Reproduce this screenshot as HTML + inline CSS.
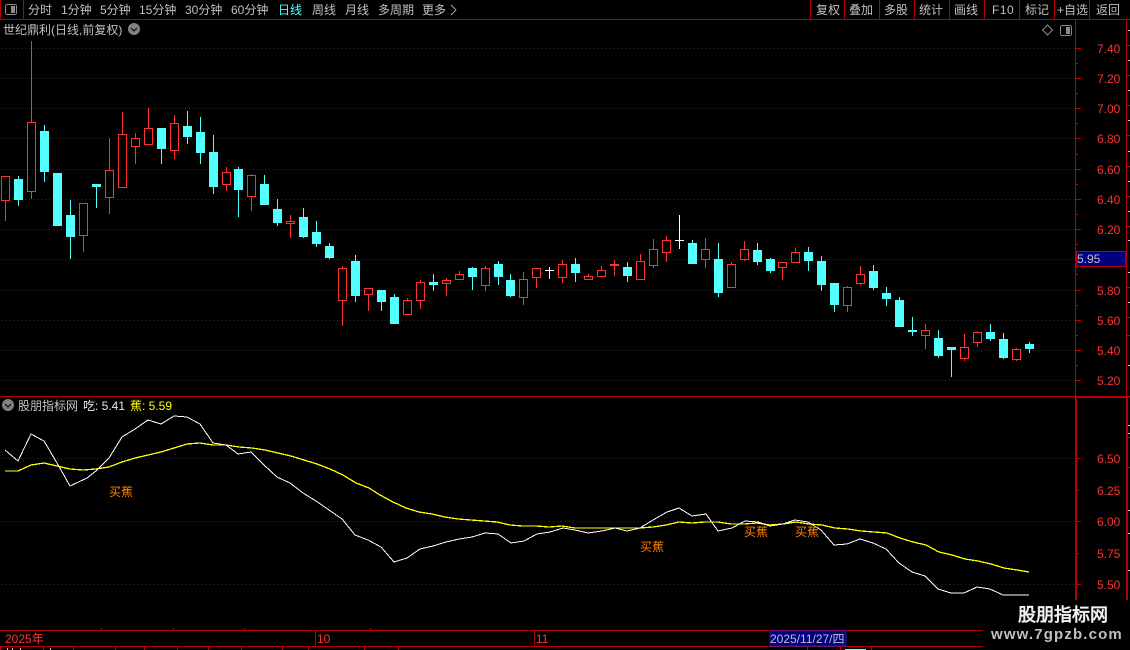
<!DOCTYPE html>
<html><head><meta charset="utf-8"><title>K线</title>
<style>
html,body{margin:0;padding:0;background:#000;width:1130px;height:650px;overflow:hidden}
svg{display:block;position:absolute;left:0;top:0}
text{font-family:"Liberation Sans","WenQuanYi Zen Hei",sans-serif;font-size:12px;fill:#c0c0c0}
.r{fill:#ff3232}
.o{fill:#ff8000}
.y{fill:#ffff00}
.c{fill:#54ffff}
.w{fill:#e8e8e8}
</style></head><body>
<svg width="1130" height="650" viewBox="0 0 1130 650" shape-rendering="crispEdges">
<rect width="1130" height="650" fill="#000"/>
<!-- grid -->
<path fill="none" stroke="#9c0000" stroke-dasharray="1 3" d="M1 48.5H1075M1 78.5H1075M1 108.5H1075M1 138.5H1075M1 169.5H1075M1 199.5H1075M1 229.5H1075M1 259.5H1075M1 290.5H1075M1 320.5H1075M1 350.5H1075M1 380.5H1075M1 458.5H1075M1 521.5H1075M1 584.5H1075"/>
<!-- frame -->
<path fill="none" stroke="#b80000" d="M0.5 0V19M23.5 0V19M810.5 0V19M844.5 0V19M879.5 0V19M914.5 0V19M949.5 0V19M984.5 0V19M1019.5 0V19M1054.5 0V19M1089.5 0V19M1075.5 20V396M0 19.5H1130M0 396.5H1130M1126.5 20V396M0 630.5H983M0 646.500H983"/>
<path fill="none" stroke="#b80000" stroke-width="2" d="M1076 396V600M1127 396V600M1076 397H1127"/>
<!-- axis ticks -->
<path fill="none" stroke="#b80000" d="M1075 48.5h6M1075 63.5h3M1075 78.5h6M1075 93.5h3M1075 108.5h6M1075 123.5h3M1075 138.5h6M1075 154.5h3M1075 169.5h6M1075 184.5h3M1075 199.5h6M1075 214.5h3M1075 229.5h6M1075 244.5h3M1075 274.5h3M1075 290.5h6M1075 305.5h3M1075 320.5h6M1075 335.5h3M1075 350.5h6M1075 365.5h3M1075 380.5h6M1076 458.5h5M1076 490.5h3M1076 521.5h5M1076 553.5h3M1076 584.5h5M101.5 628v2M173.5 628v2M244.5 628v2M370.5 628v2M315.5 631v15M534.5 631v15M0.5 647v3M43.5 647v3M73.5 647v3M115.5 647v3M144.5 647v3M177.5 647v3M208.5 647v3M241.5 647v3M282.5 647v3M308.5 647v3M364.5 647v3M398.5 647v3M807.5 647v3M840.5 647v3M871.5 647v3"/>
<path fill="none" stroke="#b80000" d="M1127 45.5h3M1127 75.5h3M1127 105.5h3M1127 135.5h3M1127 166.5h3M1127 196.5h3M1127 226.5h3M1127 287.5h3M1127 317.5h3M1127 335.5h3M1128 437.5h2M1128 467.5h2"/>
<path fill="none" stroke="#c8c8c8" d="M1128 30.5h2M1128 60.5h2M1128 90.5h2M1128 120.5h2M1128 151.5h2M1128 181.5h2M1128 211.5h2M1128 240.5h2M1128 272.5h2M1128 302.5h2M1128 365.5h2M1128 425.5h2M1128 433.5h2M1128 510.5h2M1128 533.5h2M1128 570.5h2"/>
<!-- bottom row fragments -->
<path fill="none" stroke="#c0c0c0" d="M7.500 648v2M12.500 648v2M20.500 648v2M50.500 648v2"/>
<path fill="none" stroke="#54ffff" d="M845 649.500h21"/>
<!-- red candles -->
<path fill="none" stroke="#ff3232" d="M1.5 176.5h8v24h-8zM5.5 201V221M27.5 122.5h8v69h-8zM31.5 41V122M31.5 192V199M79.5 203.5h8v32h-8zM83.5 236V252M105.5 170.5h8v27h-8zM109.5 138V170M109.5 198V214M118.5 134.5h8v53h-8zM122.5 112V134M131.5 138.5h8v8h-8zM135.5 133V138M135.5 147V164M144.5 128.5h8v16h-8zM148.5 108V128M170.5 123.5h8v27h-8zM174.5 115V123M174.5 151V159M222.5 172.5h8v12h-8zM226.5 167V172M226.5 185V191M247.5 175.5h8v21h-8zM251.5 174V175M251.5 197V211M286.5 221.5h8v2h-8zM290.5 215V221M290.5 224V238M338.5 268.5h8v32h-8zM342.5 266V268M342.5 301V326M364.5 288.5h8v6h-8zM368.5 295V311M403.5 300.5h8v14h-8zM407.5 298V300M416.5 282.5h8v18h-8zM420.5 280V282M420.5 301V309M442.5 280.5h8v3h-8zM446.5 278V280M446.5 284V296M455.5 274.5h8v5h-8zM459.5 271V274M481.5 268.5h8v17h-8zM485.5 266V268M485.5 286V291M519.5 279.5h8v18h-8zM523.5 272V279M523.5 298V305M532.5 268.5h8v9h-8zM536.5 278V288M558.5 264.5h8v13h-8zM562.5 260V264M562.5 278V283M584.5 276.5h8v3h-8zM588.5 274V276M597.5 270.5h8v6h-8zM601.5 266V270M614.5 260V276M636.5 261.5h8v18h-8zM640.5 254V261M649.5 249.5h8v16h-8zM653.5 239V249M653.5 266V268M662.5 240.5h8v12h-8zM666.5 236V240M666.5 253V262M701.5 249.5h8v10h-8zM705.5 238V249M705.5 260V268M727.5 264.5h8v23h-8zM731.5 262V264M740.5 249.5h8v10h-8zM744.5 241V249M744.5 260V261M778.5 262.5h8v5h-8zM782.5 268V280M791.5 252.5h8v10h-8zM795.5 248V252M843.5 287.5h8v18h-8zM847.5 286V287M847.5 306V312M856.5 274.5h8v9h-8zM860.5 266V274M860.5 284V285M921.5 330.5h8v5h-8zM925.5 324V330M925.5 336V349M960.5 347.5h8v11h-8zM964.5 334V347M964.5 359V361M973.5 332.5h8v10h-8zM977.5 331V332M977.5 343V347M1012.5 349.5h8v10h-8zM1016.5 348V349M1016.5 360V361"/>
<rect x="610" y="264" width="9" height="2" fill="#ff3232"/>
<!-- cyan wicks -->
<path fill="none" stroke="#54ffff" d="M18.5 176V206M44.5 125V182M70.5 200V259M96.5 184V208M161.5 128V164M187.5 111V144M200.5 117V164M213.5 135V194M238.5 167V217M264.5 175V205M277.5 199V226M303.5 208V238M316.5 221V247M329.5 243V259M355.5 255V302M381.5 290V311M394.5 294V324M433.5 274V291M472.5 267V290M498.5 261V285M510.5 274V297M575.5 258V282M627.5 262V282M692.5 240V264M718.5 243V297M757.5 243V265M770.5 258V273M808.5 247V271M821.5 256V291M834.5 283V312M873.5 265V290M886.5 287V306M899.5 297V327M912.5 317V336M938.5 330V358M951.5 347V377M990.5 324V341M1003.5 333V359M1029.5 342V353"/>
<!-- cyan bodies -->
<path fill="#54ffff" d="M14 179h9v21h-9zM40 131h9v41h-9zM53 173h9v53h-9zM66 215h9v22h-9zM92 184h9v3h-9zM157 128h9v21h-9zM183 126h9v11h-9zM196 132h9v21h-9zM209 152h9v35h-9zM234 169h9v21h-9zM260 184h9v21h-9zM273 209h9v14h-9zM299 217h9v20h-9zM312 232h9v12h-9zM325 246h9v12h-9zM351 261h9v35h-9zM377 290h9v12h-9zM390 297h9v27h-9zM429 282h9v3h-9zM468 268h9v9h-9zM494 264h9v13h-9zM506 280h9v16h-9zM571 264h9v9h-9zM623 267h9v9h-9zM688 243h9v21h-9zM714 259h9v34h-9zM753 250h9v12h-9zM766 259h9v12h-9zM804 252h9v9h-9zM817 261h9v24h-9zM830 283h9v22h-9zM869 271h9v17h-9zM882 293h9v6h-9zM895 300h9v27h-9zM908 330h9v2h-9zM934 338h9v18h-9zM947 347h9v3h-9zM986 332h9v7h-9zM999 339h9v19h-9zM1025 344h9v5h-9z"/>
<!-- white crosses -->
<path fill="none" stroke="#fff" d="M545 270.5h9M549.5 267V279M675 240.5h9M679.5 215V249"/>
<!-- indicator lines -->
<polyline fill="none" stroke="#ffff00" stroke-width="1.3" points="5,471 18,471 31,465 44,463 57,466 70,469 83,470 96,469 109,467 122,462 135,458 148,455 161,452 174,448 187,444 200,443 213,445 226,445 239,447 252,448 265,450 278,453 291,456 304,460 317,464 330,469 343,475 356,483 369,488 380,495 393,502 406,508 419,512 432,514 445,517 458,519 471,520 484,521 497,522 510,525 523,526 536,526 549,527 562,526 575,528 588,528 601,528 614,528 627,528 640,528 653,527 666,525 679,522 692,523 705,522 718,522 731,524 744,524 757,523 770,525 783,524 796,522 809,524 822,525 835,528 848,529 861,531 874,532 887,533 900,538 913,542 926,545 939,552 952,555 965,559 978,561 991,564 1004,568 1017,570 1029,572"/>
<polyline fill="none" stroke="#fff" points="5,450 18,461 31,434 44,441 57,463 70,486 87,478 96,471 109,458 122,437 135,429 148,420 161,424 174,416 187,417 200,424 213,443 226,445 238,454 251,452 264,465 277,477 290,483 303,493 316,501 329,510 342,519 355,535 368,540 381,547 394,562 407,558 420,549 433,546 446,542 459,539 472,537 485,533 498,534 511,543 524,541 537,534 550,532 563,528 575,530 588,533 602,531 615,528 627,531 640,528 653,520 667,512 679,508 692,516 706,514 718,531 732,528 745,521 758,522 770,526 783,524 795,520 808,522 821,530 834,545 847,544 860,539 873,543 886,549 899,563 912,572 925,576 938,589 951,593 964,593 977,587 990,589 1003,595 1016,595 1029,595"/>
<!-- 5.95 box -->
<rect x="1076.5" y="251.5" width="49" height="15" fill="#000080" stroke="#b80000"/>
<text x="1077" y="263">5.95</text>
<!-- date box -->
<rect x="770" y="631" width="76" height="15" fill="#000080" stroke="#2020c0"/>
<text x="770" y="643" font-size="12">2025/11/27/四</text>
<!-- left toolbar icon -->
<rect x="5.5" y="4.5" width="11" height="10" rx="2" fill="none" stroke="#8c8c8c"/>
<rect x="11" y="6" width="4" height="7" fill="#8c8c8c"/>
<!-- toolbar text -->
<text x="28" y="14">分时</text>
<text x="61" y="14">1分钟</text>
<text x="100" y="14">5分钟</text>
<text x="139" y="14">15分钟</text>
<text x="185" y="14">30分钟</text>
<text x="231" y="14">60分钟</text>
<text x="278" y="14" class="c">日线</text>
<text x="312" y="14">周线</text>
<text x="345" y="14">月线</text>
<text x="378" y="14">多周期</text>
<text x="422" y="14">更多</text>
<path fill="none" stroke="#b0b0b0" stroke-width=".9" shape-rendering="auto" d="M451 5l5 5-5 5"/>
<text x="816" y="14">复权</text>
<text x="849" y="14">叠加</text>
<text x="884" y="14">多股</text>
<text x="919" y="14">统计</text>
<text x="954" y="14">画线</text>
<text x="992" y="14" style="letter-spacing:.5px">F10</text>
<text x="1025" y="14">标记</text>
<text x="1057" y="14">+自选</text>
<text x="1096" y="14">返回</text>
<!-- title -->
<text x="3" y="34">世纪鼎利(日线,前复权)</text>
<circle cx="134" cy="29" r="6" fill="#808080" shape-rendering="auto"/>
<path fill="none" stroke="#000" shape-rendering="auto" d="M131 28l3 3 3-3"/>
<path fill="none" stroke="#8c8c8c" shape-rendering="auto" d="M1047.500 25l5 5-5 5-5-5z"/>
<rect x="1060.500" y="25.500" width="11" height="10" rx="2" fill="none" stroke="#8c8c8c"/>
<rect x="1066" y="27" width="4" height="7" fill="#8c8c8c"/>
<!-- axis labels -->
<text x="1097" y="53" class="r">7.40</text>
<text x="1097" y="83" class="r">7.20</text>
<text x="1097" y="113" class="r">7.00</text>
<text x="1097" y="143" class="r">6.80</text>
<text x="1097" y="174" class="r">6.60</text>
<text x="1097" y="204" class="r">6.40</text>
<text x="1097" y="234" class="r">6.20</text>
<text x="1097" y="295" class="r">5.80</text>
<text x="1097" y="325" class="r">5.60</text>
<text x="1097" y="355" class="r">5.40</text>
<text x="1097" y="385" class="r">5.20</text>
<text x="1097" y="463" class="r">6.50</text>
<text x="1097" y="495" class="r">6.25</text>
<text x="1097" y="526" class="r">6.00</text>
<text x="1097" y="558" class="r">5.75</text>
<text x="1097" y="589" class="r">5.50</text>
<!-- indicator header -->
<circle cx="8" cy="405" r="6" fill="#808080" shape-rendering="auto"/>
<path fill="none" stroke="#000" shape-rendering="auto" d="M5 404l3 3 3-3"/>
<text x="18" y="410">股朋指标网</text>
<text x="83" y="410" class="w">吃: 5.41</text>
<text x="130" y="410" class="y">蕉: 5.59</text>
<text x="109" y="496" class="o">买蕉</text>
<text x="640" y="551" class="o">买蕉</text>
<text x="744" y="536" class="o">买蕉</text>
<text x="795" y="536" class="o">买蕉</text>
<!-- bottom axis -->
<text x="5" y="643" class="r">2025年</text>
<text x="317" y="643" class="r">10</text>
<text x="536" y="643" class="r">11</text>
<!-- watermark -->
<rect x="983" y="600" width="147" height="50" fill="#000"/>
<text x="1018" y="621" style="font-size:18px;font-weight:bold;fill:#f0f0f0" shape-rendering="auto">股朋指标网</text>
<text x="991" y="639" style="font-size:15px;font-weight:bold;letter-spacing:1.15px;fill:#c0c0c0">www.7gpzb.com</text>
</svg>
</body></html>
